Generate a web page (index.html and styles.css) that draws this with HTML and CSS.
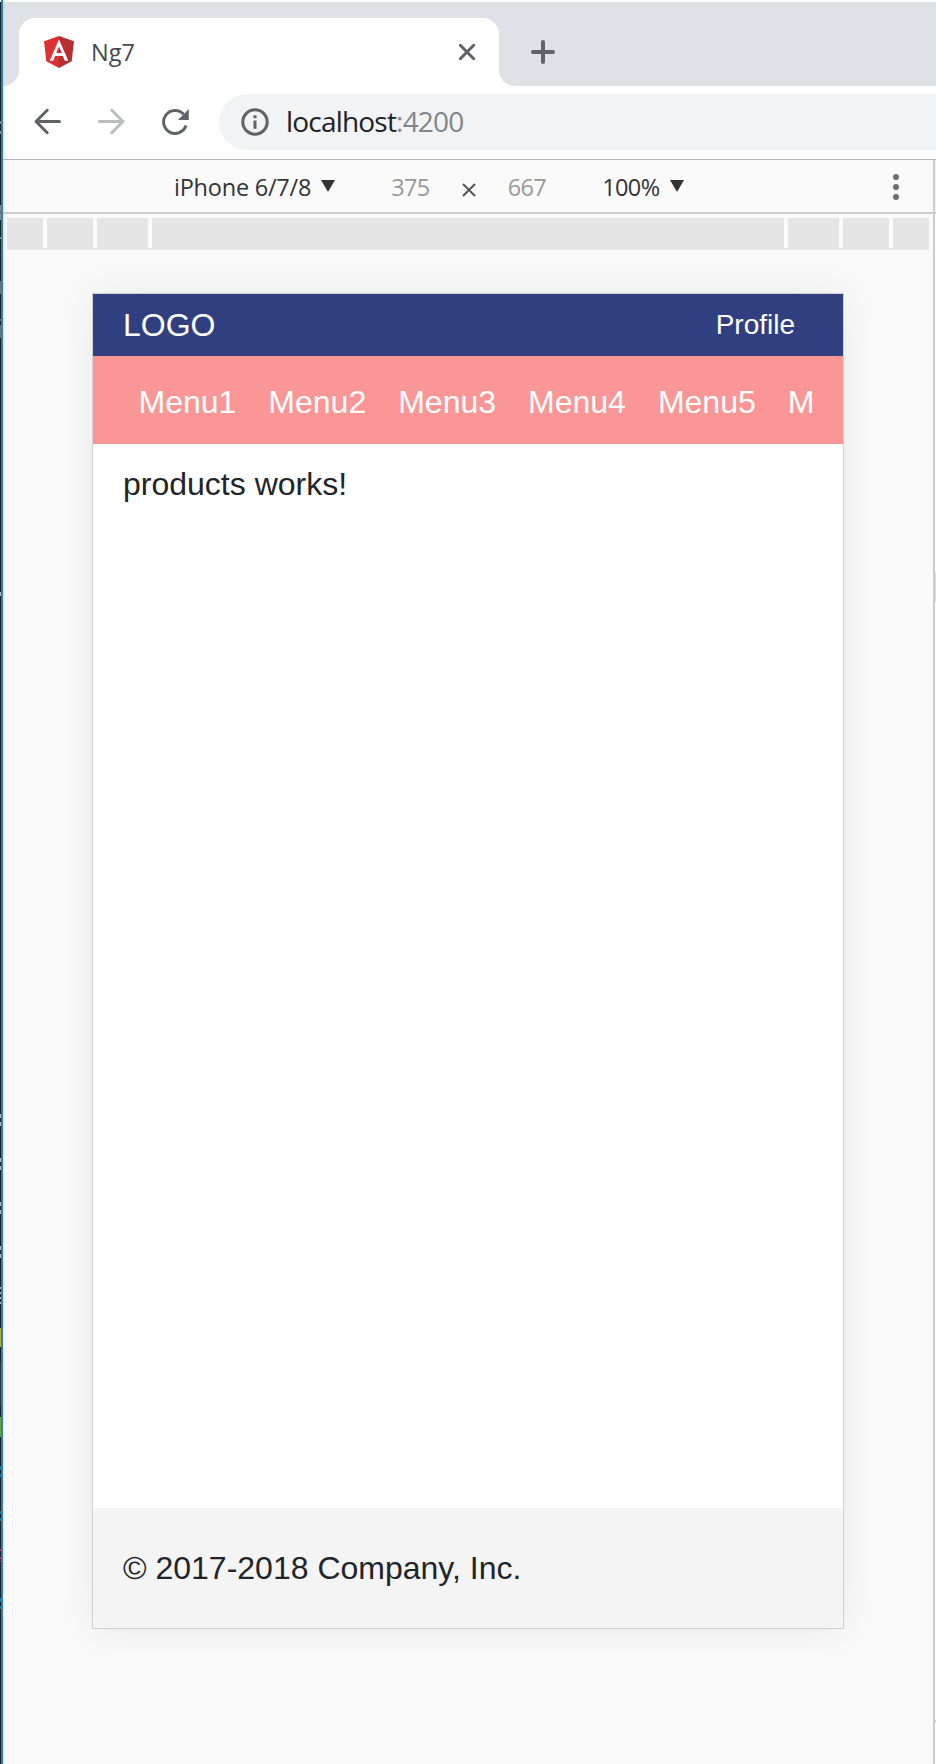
FILE: index.html
```html
<!DOCTYPE html>
<html lang="en">
<head>
<meta charset="utf-8">
<title>Ng7</title>
<link rel="stylesheet" href="styles.css">
</head>
<body>
<svg class="editor-edge" width="1" height="1764" viewBox="0 0 1 1764" shape-rendering="crispEdges">
  <path fill="#1e1e1e" d="M0 2h1v1762H0z"/>
  <path fill="#8c8c8c" d="M0 121h1v3H0zM0 131h1v3H0zM0 205h1v6H0zM0 214h1v6H0zM0 237h1v2H0z"/>
  <path fill="#6e6e6e" d="M0 281h1v13H0zM0 319h1v2H0zM0 325h1v13H0zM0 211h1v3H0z"/>
  <path fill="#b4b4b4" d="M0 592h1v4H0zM0 1114h1v4H0zM0 1122h1v4H0zM0 1158h1v4H0zM0 1166h1v4H0zM0 1202h1v4H0zM0 1210h1v4H0zM0 1246h1v4H0zM0 1254h1v4H0zM0 1287h1v2H0zM0 1292h1v2H0zM0 1297h1v2H0zM0 1302h1v2H0z"/>
  <path fill="#b3ab26" d="M0 1328h1v19H0z"/>
  <path fill="#333" d="M0 1362h1v44H0z"/>
  <path fill="#74a02f" d="M0 1417h1v20H0z"/>
  <path fill="#28699a" d="M0 1466h1v4H0zM0 1474h1v3H0zM0 1511h1v3H0zM0 1518h1v3H0zM0 1598h1v4H0zM0 1606h1v3H0z"/>
  <path fill="#b5327c" d="M0 1549h1v2H0zM0 1557h1v2H0zM0 1561h1v1H0z"/>
</svg>
<div class="browser">
  <div class="tab-strip">
    <div class="flare flare-left"></div>
    <div class="tab">
      <svg class="favicon" width="30" height="32" viewBox="0 0 30 32">
        <path fill="#dd3035" d="M15 0 0 5.3l2.3 20L15 32z"/>
        <path fill="#b52e31" d="M15 0l15 5.3-2.3 20L15 32z"/>
        <path fill="#fff" fill-rule="evenodd" d="M15 3.6 5.7 24.7h3.5l1.9-4.7h7.8l1.9 4.7h3.5zm0 6.9 2.8 6.6h-5.6z"/>
      </svg>
      <span class="tab-title">Ng7</span>
      <svg class="tab-close" width="16" height="16" viewBox="0 0 16 16"><path d="M1.3 1.3l13.4 13.4M14.7 1.3L1.3 14.7"/></svg>
    </div>
    <div class="flare flare-right"></div>
    <svg class="new-tab" width="24" height="24" viewBox="0 0 24 24"><path d="M12 2v20M2 12h20"/></svg>
  </div>
  <div class="toolbar">
    <svg class="nav-icon back" width="28" height="28" viewBox="0 0 28 28"><path d="M26.5 13.5H4M14.2 2.3 3 13.5l11.2 11.2"/></svg>
    <svg class="nav-icon forward" width="28" height="28" viewBox="0 0 28 28"><path d="M2.5 13.5H25M14.8 2.3 26 13.5 14.8 24.7"/></svg>
    <svg class="nav-icon reload" width="28" height="28" viewBox="0 0 28 28"><path d="M25 17.6A11.5 11.5 0 1 1 22.6 6.2"/><path class="solid" d="M27.8 1v11H17z"/></svg>
    <div class="omnibox">
      <svg class="info" width="28" height="28" viewBox="0 0 28 28"><circle cx="14" cy="14" r="12.2"/><path d="M14 12.6v8.2M14 7.2v3"/></svg>
      <span class="url"><span class="host">localhost</span><span class="port">:4200</span></span>
    </div>
  </div>
  <div class="devtools">
    <div class="emulator">
      <div class="device-bar">
        <span class="device">iPhone 6/7/8</span>
        <svg class="caret" width="14" height="12" viewBox="0 0 14 12"><path d="M0 0h14L7 12z"/></svg>
        <span class="dim width">375</span>
        <svg class="times" width="14" height="14" viewBox="0 0 14 14"><path d="M1 1l12 12M13 1L1 13"/></svg>
        <span class="dim height">667</span>
        <span class="zoom">100%</span>
        <svg class="caret" width="14" height="12" viewBox="0 0 14 12"><path d="M0 0h14L7 12z"/></svg>
        <svg class="more" width="6" height="26" viewBox="0 0 6 26"><circle cx="3" cy="3" r="3"/><circle cx="3" cy="13" r="3"/><circle cx="3" cy="23" r="3"/></svg>
      </div>
      <div class="presets">
        <i class="edge"></i><i class="tablet"></i><i class="large"></i><i class="mobile"></i><i class="large"></i><i class="tablet"></i><i class="edge"></i>
      </div>
      <div class="screen">
        <header class="site-header"><span class="logo">LOGO</span><span class="profile">Profile</span></header>
        <div class="menu-bar">
          <nav class="menu"><span>Menu1</span><span>Menu2</span><span>Menu3</span><span>Menu4</span><span>Menu5</span><span>M</span></nav>
        </div>
        <main class="content">products works!</main>
        <footer class="site-footer">© 2017-2018 Company, Inc.</footer>
      </div>
    </div>
    <svg class="panel-edge" width="1" height="1604" viewBox="0 0 1 1604" shape-rendering="crispEdges">
      <path fill="#f3f3f3" d="M0 0h1v52H0z"/>
      <path fill="#ccc" d="M0 52h1v2H0zM0 1560h1v2H0z"/>
      <path fill="#fff" d="M0 54h1v1506H0zM0 1562h1v42H0z"/>
      <path fill="#dadada" d="M0 412h1v30H0z"/>
    </svg>
  </div>
</div>
</body>
</html>
```

FILE: styles.css
```css
* { box-sizing: border-box; }

body {
  margin: 0;
  width: 936px;
  height: 1764px;
  display: flex;
  overflow: hidden;
  background: #fff;
  font-family: "Open Sans", "Noto Sans", sans-serif;
}

svg { display: block; flex: none; fill: none; }

.browser {
  width: 935px;
  border-left: 2px solid #1c83d8;
  display: flex;
  flex-direction: column;
}

/* Tab strip */
.tab-strip {
  height: 84px;
  margin-top: 2px;
  padding-top: 16px;
  background: #dee1e6;
  display: flex;
}

.flare { width: 16px; height: 16px; align-self: flex-end; }
.flare-left { background: radial-gradient(circle at 0 0, #dee1e6 15.5px, #fff 16.5px); }
.flare-right { background: radial-gradient(circle at 100% 0, #dee1e6 15.5px, #fff 16.5px); }

.tab {
  width: 480px;
  height: 68px;
  padding: 0 24px 0 25px;
  border-radius: 16px 16px 0 0;
  background: #fff;
  display: flex;
  align-items: center;
}

.tab-title {
  margin: -1px 0 0 17px;
  font-size: 23.5px;
  color: #45494d;
}

.tab-close {
  margin-left: auto;
  stroke: #5f6368;
  stroke-width: 3;
  stroke-linecap: round;
}

.new-tab {
  margin: 22px 0 0 16px;
  stroke: #5f6368;
  stroke-width: 4;
  stroke-linecap: round;
}

/* Navigation */
.toolbar {
  height: 74px;
  padding: 8px 0 15px 30px;
  border-bottom: 1px solid #b6b6b6;
  background: #fff;
  display: flex;
}

.nav-icon {
  margin: 14px 36px 0 0;
  stroke: #5f6368;
  stroke-width: 3;
  stroke-linecap: round;
  stroke-linejoin: round;
}

.forward { stroke: #babcbe; }
.reload { margin-right: 30px; stroke-linecap: butt; }
.solid { fill: #5f6368; stroke: none; }

.omnibox {
  flex: 1;
  height: 56px;
  padding-left: 22px;
  border-radius: 28px 0 0 28px;
  background: #f1f3f4;
  display: flex;
  align-items: center;
}

.info { stroke: #5f6368; stroke-width: 3; }

.url {
  margin: -2px 0 0 17px;
  font-size: 28px;
  letter-spacing: -0.8px;
}

.host { color: #202124; }
.port { color: #80868b; }

/* Device emulation */
.devtools { flex: 1; display: flex; }

.emulator {
  width: 932px;
  border-right: 2px solid #ccc;
  background: #fafafa;
}

.device-bar {
  height: 54px;
  padding: 2px 34px 0 171px;
  border-bottom: 2px solid #ccc;
  display: flex;
  align-items: center;
  font-size: 23.5px;
  letter-spacing: -0.6px;
  color: #333;
}

.device { letter-spacing: -0.23px; }
.caret { fill: #333; margin: -2px 0 0 10px; }
.dim { color: #999; }
.width { margin-left: 56px; }
.times { margin: 6px 0 0 32px; stroke: #555; stroke-width: 2; }
.height { margin-left: 32px; }
.zoom { margin-left: 56px; }
.more { margin-left: auto; fill: #6e6e6e; }

.presets {
  height: 36px;
  padding: 4px 4px 0;
  background: linear-gradient(#e5e5e5, #e5e5e5) 4px 34px / 922px 2px no-repeat;
  display: flex;
  gap: 4px;
}

.presets i { height: 32px; background: #e5e5e5; }
.edge { width: 36px; }
.tablet { width: 46px; }
.large { width: 51px; }
.mobile { flex: 1; }

/* Emulated page */
.screen {
  width: 752px;
  height: 1336px;
  margin: 43px 0 0 89px;
  border: 1px solid #d0d0d0;
  background: #fff;
  box-shadow: 0 0 40px rgba(0, 0, 0, 0.075);
  display: flex;
  flex-direction: column;
  font-family: "Liberation Sans", Arial, sans-serif;
  font-size: 32px;
  line-height: 48px;
  color: #212529;
}

.site-header {
  height: 62px;
  padding: 0 48px 0 30px;
  background: #303f7f;
  color: #fff;
  display: flex;
  justify-content: space-between;
  align-items: center;
}

.profile { font-size: 28px; }

.menu-bar {
  height: 88px;
  padding: 22px 30px 0;
  background: #fa9796;
  color: #fff;
}

.menu {
  padding-left: 15.5px;
  display: flex;
  gap: 32px;
}

.content { flex: 1; padding: 16px 30px; }

.site-footer {
  height: 120px;
  padding: 36px 30px;
  background: #f4f4f4;
}
```
